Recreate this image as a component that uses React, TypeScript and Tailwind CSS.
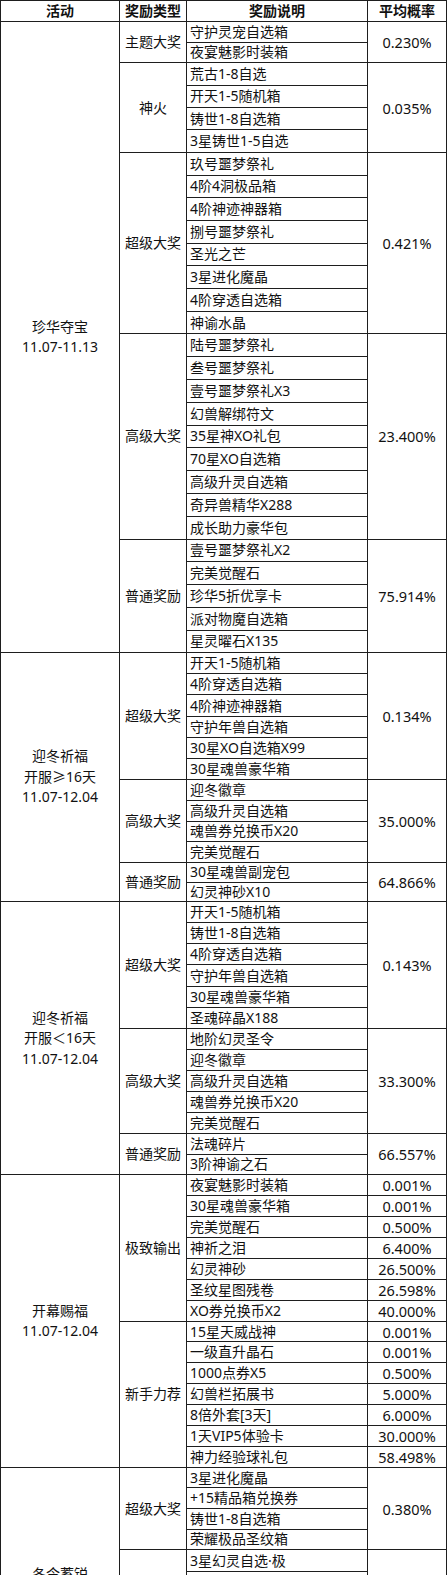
type Sub = {
  type: string;
  items: string[];
  rate?: string;
  rates?: string[];
  row: string;
};

type Group = {
  id: string;
  label: string[];
  subs: Sub[];
};

const groups: Group[] = [
  {
    id: 'zhenhua',
    label: ['珍华夺宝', '11.07-11.13'],
    subs: [
      { type: '主题大奖', items: ['守护灵宠自选箱', '夜宴魅影时装箱'], rate: '0.230%', row: 'h-[20.65px]' },
      {
        type: '神火',
        items: ['荒古1-8自选', '开天1-5随机箱', '铸世1-8自选箱', '3星铸世1-5自选'],
        rate: '0.035%',
        row: 'h-[22.4px]',
      },
      {
        type: '超级大奖',
        items: [
          '玖号噩梦祭礼',
          '4阶4洞极品箱',
          '4阶神迹神器箱',
          '捌号噩梦祭礼',
          '圣光之芒',
          '3星进化魔晶',
          '4阶穿透自选箱',
          '神谕水晶',
        ],
        rate: '0.421%',
        row: 'h-[22.7px]',
      },
      {
        type: '高级大奖',
        items: [
          '陆号噩梦祭礼',
          '叁号噩梦祭礼',
          '壹号噩梦祭礼X3',
          '幻兽解绑符文',
          '35星神XO礼包',
          '70星XO自选箱',
          '高级升灵自选箱',
          '奇异兽精华X288',
          '成长助力豪华包',
        ],
        rate: '23.400%',
        row: 'h-[22.8px]',
      },
      {
        type: '普通奖励',
        items: ['壹号噩梦祭礼X2', '完美觉醒石', '珍华5折优享卡', '派对物魔自选箱', '星灵曜石X135'],
        rate: '75.914%',
        row: 'h-[22.75px]',
      },
    ],
  },
  {
    id: 'yingdong-a',
    label: ['迎冬祈福', '开服≥16天', '11.07-12.04'],
    subs: [
      {
        type: '超级大奖',
        items: ['开天1-5随机箱', '4阶穿透自选箱', '4阶神迹神器箱', '守护年兽自选箱', '30星XO自选箱X99', '30星魂兽豪华箱'],
        rate: '0.134%',
        row: 'h-[21.1px]',
      },
      {
        type: '高级大奖',
        items: ['迎冬徽章', '高级升灵自选箱', '魂兽券兑换币X20', '完美觉醒石'],
        rate: '35.000%',
        row: 'h-[20.85px]',
      },
      { type: '普通奖励', items: ['30星魂兽副宠包', '幻灵神砂X10'], rate: '64.866%', row: 'h-[19.5px]' },
    ],
  },
  {
    id: 'yingdong-b',
    label: ['迎冬祈福', '开服＜16天', '11.07-12.04'],
    subs: [
      {
        type: '超级大奖',
        items: ['开天1-5随机箱', '铸世1-8自选箱', '4阶穿透自选箱', '守护年兽自选箱', '30星魂兽豪华箱', '圣魂碎晶X188'],
        rate: '0.143%',
        row: 'h-[21.1px]',
      },
      {
        type: '高级大奖',
        items: ['地阶幻灵圣令', '迎冬徽章', '高级升灵自选箱', '魂兽券兑换币X20', '完美觉醒石'],
        rate: '33.300%',
        row: 'h-[21px]',
      },
      { type: '普通奖励', items: ['法魂碎片', '3阶神谕之石'], rate: '66.557%', row: 'h-[20.8px]' },
    ],
  },
  {
    id: 'kaimu',
    label: ['开幕赐福', '11.07-12.04'],
    subs: [
      {
        type: '极致输出',
        items: ['夜宴魅影时装箱', '30星魂兽豪华箱', '完美觉醒石', '神祈之泪', '幻灵神砂', '圣纹星图残卷', 'XO券兑换币X2'],
        rates: ['0.001%', '0.001%', '0.500%', '6.400%', '26.500%', '26.598%', '40.000%'],
        row: 'h-[20.9px]',
      },
      {
        type: '新手力荐',
        items: ['15星天威战神', '一级直升晶石', '1000点券X5', '幻兽栏拓展书', '8倍外套[3天]', '1天VIP5体验卡', '神力经验球礼包'],
        rates: ['0.001%', '0.001%', '0.500%', '5.000%', '6.000%', '30.000%', '58.498%'],
        row: 'h-[20.9px]',
      },
    ],
  },
  {
    id: 'dongling',
    label: ['冬令蓄锐', '11.07-12.04'],
    subs: [
      {
        type: '超级大奖',
        items: ['3星进化魔晶', '+15精品箱兑换券', '铸世1-8自选箱', '荣耀极品圣纹箱'],
        rate: '0.380%',
        row: 'h-[20.6px]',
      },
      {
        type: '高级大奖',
        items: ['3星幻灵自选·极', '', '', '', '', '', ''],
        rate: '',
        row: 'h-[21.7px]',
      },
    ],
  },
];

const line = 'border-r border-b border-[#1e1e1e]';
const rateText = 'text-[14.5px]';

function SubRows({ sub }: { sub: Sub }) {
  return (
    <div className="flex">
      <div className={`${line} w-[67px] shrink-0 flex items-center justify-center whitespace-nowrap`}>
        {sub.type}
      </div>
      {sub.rates ? (
        <div className="flex flex-col">
          {sub.items.map((item, i) => (
            <div key={item} className={`flex ${sub.row}`}>
              <div className={`${line} w-[181px] flex items-center pl-[3px] whitespace-nowrap`}>{item}</div>
              <div className={`${line} ${rateText} w-[79px] flex items-center justify-center`}>{sub.rates?.[i]}</div>
            </div>
          ))}
        </div>
      ) : (
        <>
          <div className="flex flex-col w-[181px]">
            {sub.items.map((item, i) => (
              <div key={`${i}-${item}`} className={`${line} ${sub.row} flex items-center pl-[3px] whitespace-nowrap`}>
                {item}
              </div>
            ))}
          </div>
          <div className={`${line} ${rateText} w-[79px] flex items-center justify-center`}>{sub.rate}</div>
        </>
      )}
    </div>
  );
}

export default function App() {
  return (
    <div className="w-[447px] h-[1575px] overflow-hidden bg-white text-[#111] font-['Noto_Sans','Noto_Sans_CJK_SC',sans-serif] text-[14px] leading-[20px]">
      <div className="border-l border-t border-[#1e1e1e]">
        {/* header */}
        <div className="flex h-[21px] font-bold">
          <div className={`${line} w-[119px] flex items-center justify-center`}>活动</div>
          <div className={`${line} w-[67px] flex items-center justify-center whitespace-nowrap`}>奖励类型</div>
          <div className={`${line} w-[181px] flex items-center justify-center`}>奖励说明</div>
          <div className={`${line} w-[79px] flex items-center justify-center`}>平均概率</div>
        </div>

        {groups.map((group) => (
          <div key={group.id} className="flex">
            <div className={`${line} w-[119px] shrink-0 flex flex-col items-center justify-center leading-[20.5px]`}>
              {group.label.map((text) => (
                <div key={text}>{text}</div>
              ))}
            </div>
            <div className="flex flex-col">
              {group.subs.map((sub) => (
                <SubRows key={sub.type} sub={sub} />
              ))}
            </div>
          </div>
        ))}
      </div>
    </div>
  );
}
